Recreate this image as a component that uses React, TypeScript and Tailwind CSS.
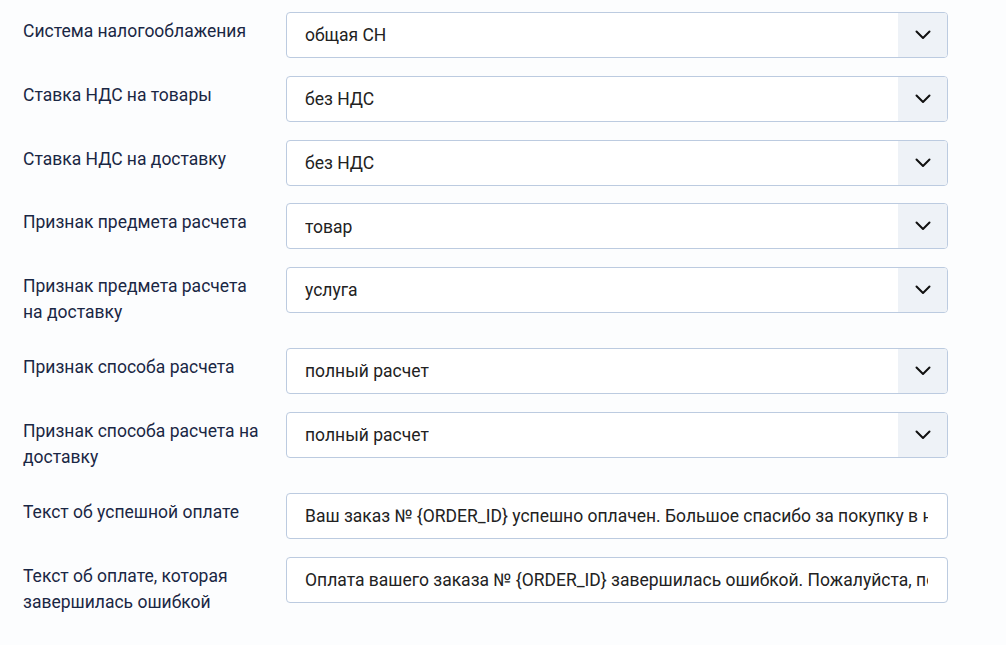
import { ReactNode } from 'react'

type Field =
  | { label: ReactNode; kind: 'select'; value: string }
  | { label: ReactNode; kind: 'text'; value: string }

const fields: Field[] = [
  { label: 'Система налогооблажения', kind: 'select', value: 'общая СН' },
  { label: 'Ставка НДС на товары', kind: 'select', value: 'без НДС' },
  { label: 'Ставка НДС на доставку', kind: 'select', value: 'без НДС' },
  { label: 'Признак предмета расчета', kind: 'select', value: 'товар' },
  { label: 'Признак предмета расчета на доставку', kind: 'select', value: 'услуга' },
  { label: 'Признак способа расчета', kind: 'select', value: 'полный расчет' },
  { label: 'Признак способа расчета на доставку', kind: 'select', value: 'полный расчет' },
  {
    label: 'Текст об успешной оплате',
    kind: 'text',
    value: 'Ваш заказ № {ORDER_ID} успешно оплачен. Большое спасибо за покупку в нашем магазине!',
  },
  {
    label: 'Текст об оплате, которая завершилась ошибкой',
    kind: 'text',
    value: 'Оплата вашего заказа № {ORDER_ID} завершилась ошибкой. Пожалуйста, попробуйте ещё раз.',
  },
]

function Chevron() {
  return (
    <svg width="16" height="10" viewBox="0 0 16 10" fill="none">
      <path d="M1.5 1.5 L8 8 L14.5 1.5" stroke="#111" strokeWidth="2" strokeLinecap="round" strokeLinejoin="round" />
    </svg>
  )
}

export default function App() {
  return (
    <div
      className="min-h-[645px] w-full bg-[#fcfdfe] pl-[23px] pt-3"
      style={{ fontFamily: 'Roboto, "Noto Sans", sans-serif' }}
    >
      <div className="flex flex-col gap-[17.75px]">
        {fields.map((f, i) => (
          <div key={i} className="flex items-start">
            <label className="w-[245px] mr-[18px] pt-[6px] pb-[5.25px] text-[17.5px] leading-[26px] text-[#1a2744]">
              {f.label}
            </label>
            <div className="w-[662px] h-[46px] flex items-stretch bg-white border border-[#bccbe0] rounded-[4px] overflow-hidden">
              <div className="flex-1 min-w-0 flex items-center pl-[18px] pr-[19px] pt-px text-[17.5px] text-[#222] whitespace-nowrap overflow-hidden">
                <span className="overflow-hidden">{f.value}</span>
              </div>
              {f.kind === 'select' && (
                <div className="w-[49px] shrink-0 bg-[#eef2f7] flex items-center justify-center">
                  <Chevron />
                </div>
              )}
            </div>
          </div>
        ))}
      </div>
    </div>
  )
}
